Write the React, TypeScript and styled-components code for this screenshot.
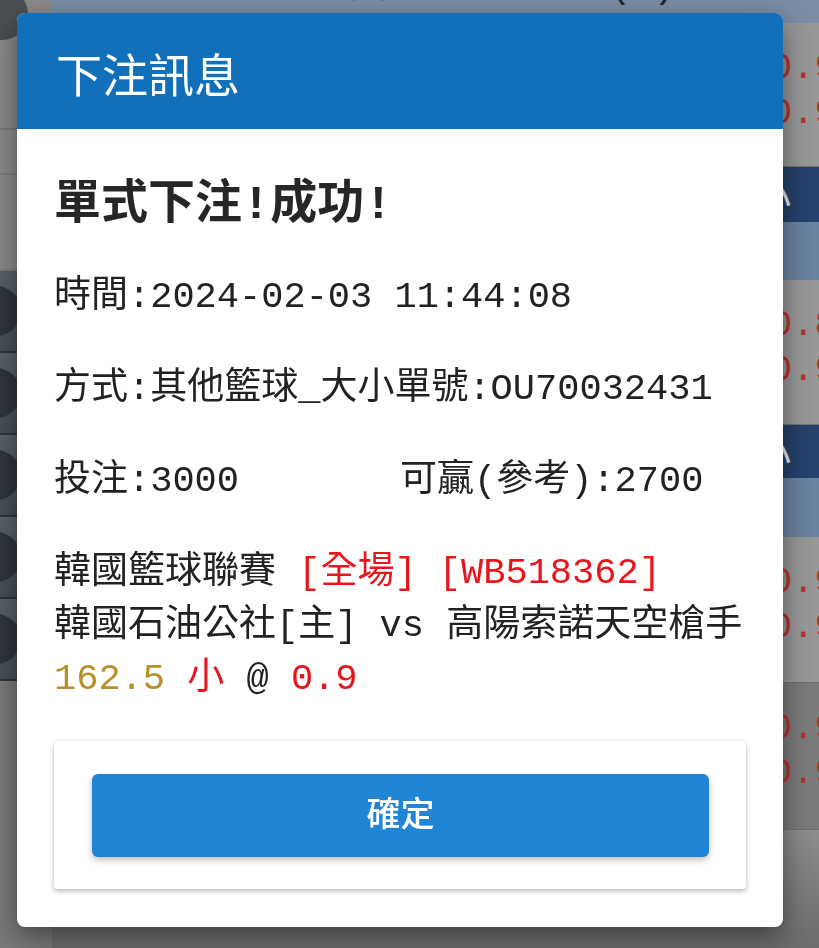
import React from "react";
import styled, { createGlobalStyle } from "styled-components";

const GlobalStyle = createGlobalStyle`
  html, body {
    margin: 0;
    padding: 0;
    overflow: hidden;
    background: #777;
  }
  * {
    box-sizing: border-box;
  }
`;

const MONO = `"Liberation Mono", "Noto Sans CJK TC", monospace`;

/* ---------- dimmed page behind the dialog ---------- */

const Page = styled.div`
  display: flex;
  width: 819px;
  height: 948px;
  overflow: hidden;
  font-family: ${MONO};
`;

const Sidebar = styled.aside`
  width: 52px;
  display: flex;
  flex-direction: column;
  background: #8a8a8a;
`;

const SideTop = styled.div`
  height: 130px;
  border-bottom: 2px solid #7a7a7a;
  overflow: hidden;
`;

const Avatar = styled.div`
  width: 52px;
  height: 52px;
  margin: -12px 0 0 -24px;
  border-radius: 50%;
  background: #4c4f53;
`;

const SideCell = styled.div<{ $h: number }>`
  height: ${(p) => p.$h}px;
  border-bottom: 2px solid #7c7c7c;
`;

const Tile = styled.div`
  height: 82px;
  display: flex;
  align-items: center;
  background: linear-gradient(#5b626b, #464d56);
  border-bottom: 2px solid #30353c;
  overflow: hidden;
`;

const TileDot = styled.div`
  width: 50px;
  height: 50px;
  margin-left: -29px;
  border-radius: 50%;
  background: #2f353d;
`;

const SideRest = styled.div`
  flex: 1;
  background: #7a7a7a;
`;

const Main = styled.main`
  flex: 1;
  display: flex;
  flex-direction: column;
`;

const TopBar = styled.div`
  height: 23px;
  background: #7b8ca4;
  padding-left: 150px;
  overflow: hidden;
  color: #1d2430;
  font-size: 37px;
  line-height: 40px;
  white-space: nowrap;
`;

const TopLabel = styled.div`
  margin-top: -33px;
`;

const OddsBlock = styled.div<{ $h: number; $dark?: boolean }>`
  height: ${(p) => p.$h}px;
  padding-top: 23px;
  display: flex;
  flex-direction: column;
  align-items: flex-end;
  background: ${(p) =>
    p.$dark
      ? "linear-gradient(90deg, #6f6f6f, #7b7b7b)"
      : "linear-gradient(90deg, #888, #989898)"};
  border-bottom: 1px solid #707070;
`;

const Odds = styled.div`
  width: 49px;
  color: #b8322d;
  font-size: 37px;
  line-height: 45px;
  white-space: nowrap;
`;

const MatchHead = styled.div<{ $h: number }>`
  height: ${(p) => p.$h}px;
  background: #26416b;
  display: flex;
  align-items: center;
  justify-content: flex-end;
  padding-right: 28px;
  color: #e8ecf2;
  font-size: 37px;
  white-space: nowrap;
`;

const SubHead = styled.div<{ $h: number }>`
  height: ${(p) => p.$h}px;
  background: linear-gradient(90deg, #5c7595, #6a83a2);
`;

const MainRest = styled.div`
  flex: 1;
  background: linear-gradient(#8c8c8c, #6c6c6c);
`;

/* ---------- dialog ---------- */

const Dialog = styled.section`
  position: fixed;
  top: 13px;
  left: 17px;
  width: 766px;
  background: #fff;
  border-radius: 8px;
  overflow: hidden;
  box-shadow: 0 10px 28px rgba(0, 0, 0, 0.45);
  font-family: ${MONO};
  color: #222;
`;

const Header = styled.header`
  height: 116px;
  display: flex;
  align-items: center;
  padding: 2px 39px 0;
  background: #1270bb;
  color: #fff;
  font-family: "Noto Sans CJK TC", sans-serif;
  font-size: 46px;
`;

const Body = styled.div`
  padding: 50px 37px 38px;
  display: flex;
  flex-direction: column;
`;

const Lines = styled.div`
  display: flex;
  flex-direction: column;
  gap: 39px;
`;

const Line = styled.div`
  font-size: 37px;
  line-height: 53px;
  white-space: nowrap;
`;

const Heading = styled(Line)`
  font-size: 47px;
  font-weight: 700;
  color: #262626;
`;

const Split = styled(Line)`
  display: grid;
  grid-template-columns: 1fr 1fr;
`;

const Tone = styled.span<{ $c: "red" | "gold" }>`
  color: ${(p) => (p.$c === "red" ? "#e8161c" : "#b8902a")};
`;

const Card = styled.div`
  margin-top: 35px;
  padding: 33px 37px 32px 38px;
  border-radius: 4px;
  background: #fff;
  box-shadow: 0 2px 5px rgba(0, 0, 0, 0.3);
`;

const ConfirmButton = styled.button`
  width: 100%;
  height: 83px;
  padding: 0 0 8px;
  border: none;
  border-radius: 6px;
  background: #2185d5;
  color: #fff;
  font-family: "Noto Sans CJK TC", sans-serif;
  font-size: 34px;
  font-weight: 500;
  box-shadow: 0 3px 6px rgba(0, 0, 0, 0.25);
  cursor: pointer;
`;

const App = () => {
  return (
    <>
      <GlobalStyle />
      <Page>
        <Sidebar>
          <SideTop>
            <Avatar />
          </SideTop>
          <SideCell $h={45} />
          <SideCell $h={96} />
          {[0, 1, 2, 3, 4].map((i) => (
            <Tile key={i}>
              <TileDot />
            </Tile>
          ))}
          <SideRest />
        </Sidebar>
        <Main>
          <TopBar>
            <TopLabel>聯盟：韓國男子籃球聯賽(-)</TopLabel>
          </TopBar>
          <OddsBlock $h={144}>
            <Odds>0.9</Odds>
            <Odds>0.9</Odds>
          </OddsBlock>
          <MatchHead $h={55}>全場大小</MatchHead>
          <SubHead $h={58} />
          <OddsBlock $h={145}>
            <Odds>0.8</Odds>
            <Odds>0.9</Odds>
          </OddsBlock>
          <MatchHead $h={53}>全場大小</MatchHead>
          <SubHead $h={59} />
          <OddsBlock $h={146}>
            <Odds>0.9</Odds>
            <Odds>0.9</Odds>
          </OddsBlock>
          <OddsBlock $h={147} $dark>
            <Odds>0.9</Odds>
            <Odds>0.9</Odds>
          </OddsBlock>
          <MainRest />
        </Main>
      </Page>

      <Dialog>
        <Header>下注訊息</Header>
        <Body>
          <Lines>
            <Heading>單式下注!成功!</Heading>
            <Line>時間:2024-02-03 11:44:08</Line>
            <Line>方式:其他籃球_大小單號:OU70032431</Line>
            <Split>
              <span>投注:3000</span>
              <span>可贏(參考):2700</span>
            </Split>
            <div>
              <Line>
                韓國籃球聯賽 <Tone $c="red">[全場] [WB518362]</Tone>
              </Line>
              <Line>韓國石油公社[主] vs 高陽索諾天空槍手</Line>
              <Line>
                <Tone $c="gold">162.5</Tone> <Tone $c="red">小</Tone> @{" "}
                <Tone $c="red">0.9</Tone>
              </Line>
            </div>
          </Lines>
          <Card>
            <ConfirmButton type="button">確定</ConfirmButton>
          </Card>
        </Body>
      </Dialog>
    </>
  );
};

export default App;
